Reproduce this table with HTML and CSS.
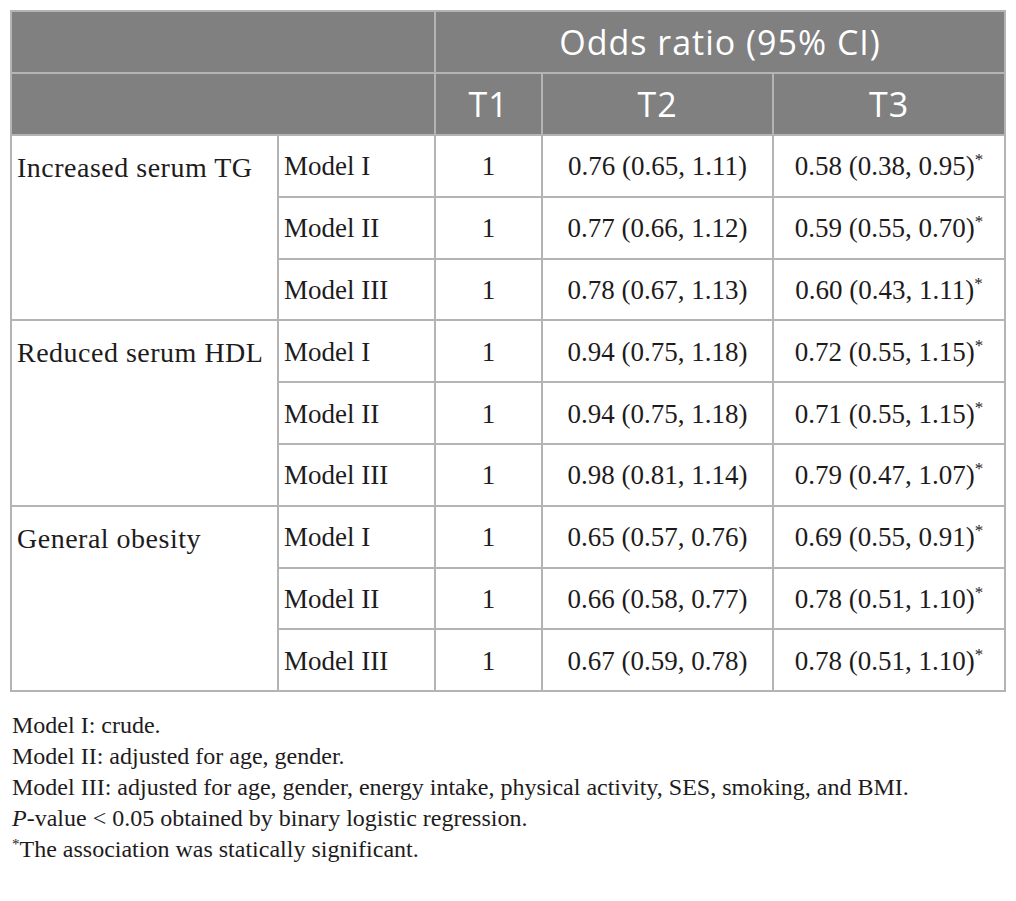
FILE: index.html
```html
<!DOCTYPE html>
<html lang="en">
<head>
    <meta charset="UTF-8">
    <title>Odds ratio table</title>
    <link rel="stylesheet" href="styles.css">
</head>
<body>
    <table class="or-table">
        <colgroup>
            <col class="c-outcome">
            <col class="c-model">
            <col class="c-t1">
            <col class="c-t2">
            <col class="c-t3">
        </colgroup>
        <thead>
            <tr>
                <th colspan="2"></th>
                <th colspan="3">Odds ratio (95% CI)</th>
            </tr>
            <tr>
                <th colspan="2"></th>
                <th>T1</th>
                <th>T2</th>
                <th>T3</th>
            </tr>
        </thead>
        <tbody>
            <tr>
                <td class="outcome" rowspan="3">Increased serum TG</td>
                <td class="model">Model I</td>
                <td>1</td>
                <td>0.76 (0.65, 1.11)</td>
                <td>0.58 (0.38, 0.95)<sup>*</sup></td>
            </tr>
            <tr>
                <td class="model">Model II</td>
                <td>1</td>
                <td>0.77 (0.66, 1.12)</td>
                <td>0.59 (0.55, 0.70)<sup>*</sup></td>
            </tr>
            <tr>
                <td class="model">Model III</td>
                <td>1</td>
                <td>0.78 (0.67, 1.13)</td>
                <td>0.60 (0.43, 1.11)<sup>*</sup></td>
            </tr>
            <tr>
                <td class="outcome" rowspan="3">Reduced serum HDL</td>
                <td class="model">Model I</td>
                <td>1</td>
                <td>0.94 (0.75, 1.18)</td>
                <td>0.72 (0.55, 1.15)<sup>*</sup></td>
            </tr>
            <tr>
                <td class="model">Model II</td>
                <td>1</td>
                <td>0.94 (0.75, 1.18)</td>
                <td>0.71 (0.55, 1.15)<sup>*</sup></td>
            </tr>
            <tr>
                <td class="model">Model III</td>
                <td>1</td>
                <td>0.98 (0.81, 1.14)</td>
                <td>0.79 (0.47, 1.07)<sup>*</sup></td>
            </tr>
            <tr>
                <td class="outcome" rowspan="3">General obesity</td>
                <td class="model">Model I</td>
                <td>1</td>
                <td>0.65 (0.57, 0.76)</td>
                <td>0.69 (0.55, 0.91)<sup>*</sup></td>
            </tr>
            <tr>
                <td class="model">Model II</td>
                <td>1</td>
                <td>0.66 (0.58, 0.77)</td>
                <td>0.78 (0.51, 1.10)<sup>*</sup></td>
            </tr>
            <tr>
                <td class="model">Model III</td>
                <td>1</td>
                <td>0.67 (0.59, 0.78)</td>
                <td>0.78 (0.51, 1.10)<sup>*</sup></td>
            </tr>
        </tbody>
    </table>

    <div class="notes">
        <p>Model I: crude.</p>
        <p>Model II: adjusted for age, gender.</p>
        <p>Model III: adjusted for age, gender, energy intake, physical activity, SES, smoking, and BMI.</p>
        <p><i>P</i>-value &lt; 0.05 obtained by binary logistic regression.</p>
        <p><sup>*</sup>The association was statically significant.</p>
    </div>
</body>
</html>
```

FILE: styles.css
```css
:root {
    --head-bg: #808080;
    --rule: #b4b4b4;
    --ink: #1e1b1c;
}
body {
    margin: 0;
    padding: 10px;
    background: #ffffff;
    color: var(--ink);
    font-family: 'Liberation Serif', 'Times New Roman', serif;
}
.or-table {
    width: 994px;
    border-collapse: collapse;
    table-layout: fixed;
    border: 2px solid var(--rule);
}
.c-outcome { width: 267px; }
.c-model { width: 157px; }
.c-t1 { width: 107px; }
.c-t2 { width: 231px; }
.c-t3 { width: 232px; }
.or-table th {
    height: 60px;
    padding: 0;
    background: var(--head-bg);
    color: #ffffff;
    font-family: 'Open Sans', 'Noto Sans', sans-serif;
    font-size: 34px;
    font-weight: 400;
    letter-spacing: 1px;
    text-align: center;
    border: 2px solid var(--rule);
}
.or-table td {
    height: 57.8px;
    padding: 2px 5px 0;
    font-size: 27px;
    text-align: center;
    vertical-align: middle;
    border: 2px solid var(--rule);
}
.or-table td.outcome {
    vertical-align: top;
    text-align: left;
    padding-top: 16px;
    font-size: 28px;
    letter-spacing: 0.5px;
    white-space: nowrap;
}
.or-table td.model {
    text-align: left;
}
.or-table sup {
    font-size: 17px;
    line-height: 0;
    vertical-align: 10px;
}
.notes {
    margin-top: 18px;
    padding-left: 2px;
}
.notes p {
    margin: 0;
    font-size: 24px;
    line-height: 31px;
}
.notes sup {
    font-size: 15px;
    line-height: 0;
    vertical-align: 8px;
}
```
